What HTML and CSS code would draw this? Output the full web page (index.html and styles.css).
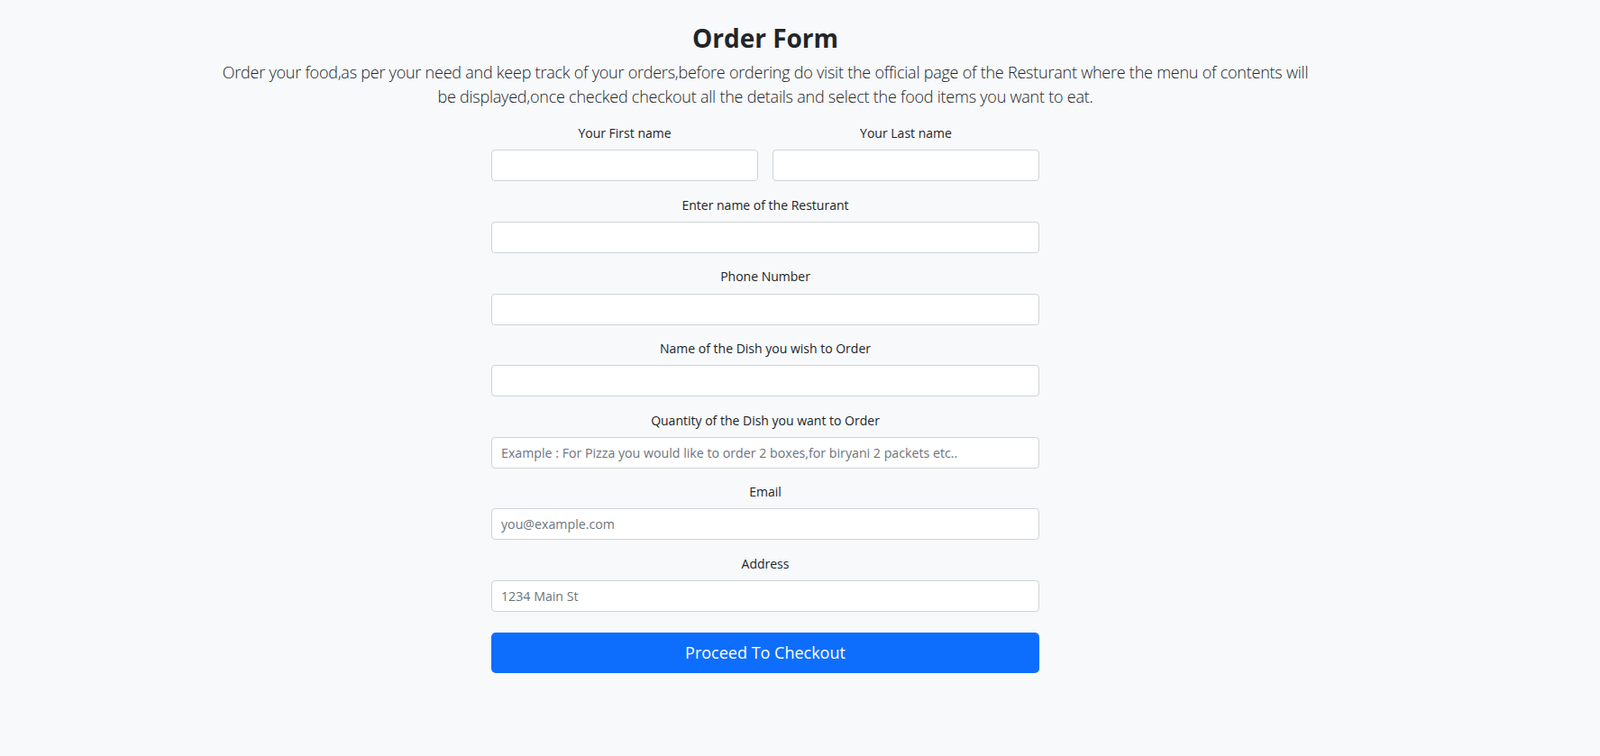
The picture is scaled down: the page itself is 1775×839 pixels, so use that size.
FILE: index.html
```html
<!DOCTYPE html>
<html lang="en">
<head>
<meta charset="utf-8">
<title>Order Form</title>
<link rel="stylesheet" href="styles.css">
</head>
<body>
<main class="page">
  <header class="intro">
    <h2 class="title">Order Form</h2>
    <p class="lead">Order your food,as per your need and keep track of your orders,before ordering do visit the official page of the Resturant where the menu of contents will be displayed,once checked checkout all the details and select the food items you want to eat.</p>
  </header>
  <form class="order-form">
    <div class="row">
      <div class="field">
        <label class="label" for="first">Your First name</label>
        <input class="control" id="first" type="text">
      </div>
      <div class="field">
        <label class="label" for="last">Your Last name</label>
        <input class="control" id="last" type="text">
      </div>
    </div>
    <div class="field">
      <label class="label" for="rest">Enter name of the Resturant</label>
      <input class="control" id="rest" type="text">
    </div>
    <div class="field">
      <label class="label" for="phone">Phone Number</label>
      <input class="control" id="phone" type="text">
    </div>
    <div class="field">
      <label class="label" for="dish">Name of the Dish you wish to Order</label>
      <input class="control" id="dish" type="text">
    </div>
    <div class="field">
      <label class="label" for="qty">Quantity of the Dish you want to Order</label>
      <input class="control" id="qty" type="text" placeholder="Example : For Pizza you would like to order 2 boxes,for biryani 2 packets etc..">
    </div>
    <div class="field">
      <label class="label" for="email">Email</label>
      <input class="control" id="email" type="email" placeholder="you@example.com">
    </div>
    <div class="field">
      <label class="label" for="addr">Address</label>
      <input class="control" id="addr" type="text" placeholder="1234 Main St">
    </div>
    <button class="btn" type="button">Proceed To Checkout</button>
  </form>
</main>
</body>
</html>
```
FILE: styles.css
```css
* { box-sizing: border-box; }
html, body { margin: 0; }
body {
  background: #f8f9fa;
  color: #212529;
  font-family: "Open Sans", "Noto Sans", sans-serif;
  font-size: 14.4px;
  line-height: 1.5;
}
.page {
  padding: 25px 77px 40px 0;
}
.intro {
  text-align: center;
}
.title {
  margin: 0;
  font-size: 28px;
  font-weight: 700;
  line-height: 34.6px;
}
.lead {
  width: 1225px;
  margin: 7px auto 16.7px;
  font-size: 18px;
  font-weight: 300;
  line-height: 27px;
  color: #212529;
  letter-spacing: -0.23px;
}
.order-form {
  width: 608px;
  margin: 0 auto;
}
.row {
  display: flex;
  gap: 16px;
}
.row .field { flex: 1; }
.field {
  margin-bottom: 15.5px;
}
.label {
  display: block;
  text-align: center;
  font-size: 14px;
  line-height: 21.6px;
  margin-bottom: 7.5px;
}
.control {
  display: block;
  width: 100%;
  height: 35px;
  padding: 0 10px;
  border: 1px solid #ced4da;
  border-radius: 4px;
  background: #fff;
  font-family: inherit;
  font-size: 14.2px;
  color: #212529;
}
.control::placeholder { color: #6c757d; }
.btn {
  display: block;
  width: 100%;
  height: 45px;
  margin-top: 23px;
  border: none;
  border-radius: 5px;
  background: #0d6efd;
  color: #fff;
  font-family: inherit;
  font-size: 18px;
}
```
